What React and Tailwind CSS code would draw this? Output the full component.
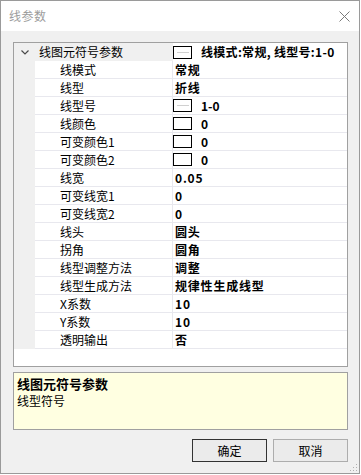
import React from "react";

const rows = [
  { name: "线模式", value: "常规" },
  { name: "线型", value: "折线" },
  { name: "线型号", value: "1-0", swatch: true, line: true },
  { name: "线颜色", value: "0", swatch: true },
  { name: "可变颜色1", value: "0", swatch: true },
  { name: "可变颜色2", value: "0", swatch: true },
  { name: "线宽", value: "0.05" },
  { name: "可变线宽1", value: "0" },
  { name: "可变线宽2", value: "0" },
  { name: "线头", value: "圆头" },
  { name: "拐角", value: "圆角" },
  { name: "线型调整方法", value: "调整" },
  { name: "线型生成方法", value: "规律性生成线型" },
  { name: "X系数", value: "10" },
  { name: "Y系数", value: "10" },
  { name: "透明输出", value: "否" },
];

function Swatch({ line }) {
  return (
    <div className="w-[19px] h-[13px] border border-black bg-white flex items-center justify-center shrink-0">
      {line && <div className="w-[12px] h-px bg-[#d0d0d0]" />}
    </div>
  );
}

export default function App() {
  return (
    <div className="w-[361px] h-[475px] bg-white font-['Noto_Sans_CJK_SC',sans-serif] text-black">
      <div className="w-[360px] h-[474px] border border-[#9a9a9a] bg-[#f0f0f0] flex flex-col relative">
        {/* title bar */}
        <div className="h-[30px] bg-white flex items-center justify-between pl-[8px] pr-[9px] shrink-0">
          <span className="text-[12px] tracking-[0.5px] text-[#9c9c9c] leading-none">线参数</span>
          <svg width="11" height="11" viewBox="0 0 11 11">
            <path d="M0.5 0.5 L10.5 10.5 M10.5 0.5 L0.5 10.5" stroke="#7a7a7a" strokeWidth="1" fill="none" />
          </svg>
        </div>
        {/* body */}
        <div className="flex-1 flex flex-col pt-[11px] pl-[12px] pr-[11px] pb-[11px]">
          {/* property grid */}
          <div className="w-[335px] h-[325px] border border-[#a0a0a0] bg-white flex flex-col overflow-hidden shrink-0">
            {/* category row */}
            <div className="h-[18px] flex shrink-0">
              <div className="w-[158px] bg-[#f0f0f0] flex items-center">
                <div className="w-[21px] flex justify-center pl-[1px]">
                  <svg width="8" height="5" viewBox="0 0 8 5">
                    <path d="M0.5 0.5 L4 4 L7.5 0.5" stroke="#4a4a4a" strokeWidth="1.2" fill="none" />
                  </svg>
                </div>
                <span className="pl-[4px] text-[12px] leading-none whitespace-nowrap">线图元符号参数</span>
              </div>
              <div className="w-px bg-[#f0f0f0]" />
              <div className="flex-1 flex items-center bg-white">
                <Swatch line />
                <span className="pl-[9px] text-[12px] font-bold leading-none whitespace-nowrap tracking-[0.3px]">
                  线模式:常规, 线型号:1-0
                </span>
              </div>
            </div>
            {rows.map((r) => (
              <div key={r.name} className="h-[18px] flex shrink-0">
                <div className="w-[21px] bg-[#f0f0f0]" />
                <div className="flex-1 flex border-b border-[#e8e8ee]">
                  <div className="w-[137px] flex items-center pl-[25px] text-[12px] leading-none whitespace-nowrap">
                    {r.name}
                  </div>
                  <div className="w-px bg-[#e8e8ee]" />
                  <div className="flex-1 flex items-center">
                    {r.swatch ? (
                      <>
                        <Swatch line={r.line} />
                        <span className="pl-[9px] text-[12px] font-bold leading-none">{r.value}</span>
                      </>
                    ) : (
                      <span className="pl-[2px] text-[12px] font-bold leading-none tracking-[0.8px] whitespace-nowrap">
                        {r.value}
                      </span>
                    )}
                  </div>
                </div>
              </div>
            ))}
          </div>
          {/* description panel */}
          <div className="mt-[5px] w-[335px] h-[58px] border border-[#a0a0a0] bg-[#ffffe1] pl-[3px] pt-[2px] shrink-0">
            <div className="text-[13px] font-bold leading-[17px]">线图元符号参数</div>
            <div className="text-[12px] leading-[17px]">线型符号</div>
          </div>
          {/* buttons */}
          <div className="mt-[9px] flex justify-end gap-[6px]">
            <button className="w-[75px] h-[23px] border border-[#333333] bg-[#ebebeb] text-[12px] leading-none text-black">
              确定
            </button>
            <button className="w-[75px] h-[23px] border border-[#adadad] bg-[#ebebeb] text-[12px] leading-none text-black">
              取消
            </button>
          </div>
        </div>
        {/* resize grip */}
        <svg className="absolute right-[1px] bottom-[1px]" width="8" height="8" viewBox="0 0 8 8">
          <rect x="6" y="0" width="1" height="1" fill="#b0b0b0" />
          <rect x="3" y="3" width="1" height="1" fill="#b0b0b0" />
          <rect x="6" y="3" width="1" height="1" fill="#b0b0b0" />
          <rect x="0" y="6" width="1" height="1" fill="#b0b0b0" />
          <rect x="3" y="6" width="1" height="1" fill="#b0b0b0" />
          <rect x="6" y="6" width="1" height="1" fill="#b0b0b0" />
        </svg>
      </div>
    </div>
  );
}
